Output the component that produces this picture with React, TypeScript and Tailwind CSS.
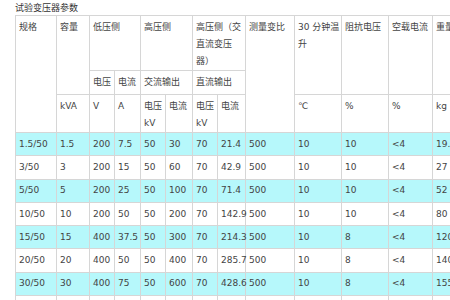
const rows: string[][] = [
  ['1.5/50', '1.5', '200', '7.5', '50', '30', '70', '21.4', '500', '10', '10', '<4', '19.5'],
  ['3/50', '3', '200', '15', '50', '60', '70', '42.9', '500', '10', '10', '<4', '27'],
  ['5/50', '5', '200', '25', '50', '100', '70', '71.4', '500', '10', '10', '<4', '52'],
  ['10/50', '10', '200', '50', '50', '200', '70', '142.9', '500', '10', '10', '<4', '80'],
  ['15/50', '15', '400', '37.5', '50', '300', '70', '214.3', '500', '10', '8', '<4', '120'],
  ['20/50', '20', '400', '50', '50', '400', '70', '285.7', '500', '10', '8', '<4', '140'],
  ['30/50', '30', '400', '75', '50', '600', '70', '428.6', '500', '10', '8', '<4', '155'],
  ['50/50', '50', '400', '125', '50', '1000', '70', '714.3', '500', '10', '8', '<4', '200'],
];

// column widths, border to border
const cols = [41, 33, 25, 26, 25, 27, 25, 28, 49, 47, 47, 44, 43];

const th = 'border border-[#d6d6d6] px-[3px] pt-[3px] align-top text-left font-normal whitespace-nowrap';
const td = 'border border-[#d6d6d6] px-[3px] align-middle whitespace-nowrap';

export default function App() {
  return (
    <div
      className="w-[450px] h-[300px] overflow-hidden bg-white pl-[15px] text-[#444] text-[9px] leading-[17px]"
      style={{ fontFamily: '"DejaVu Sans", "Noto Sans CJK SC", sans-serif' }}
    >
      <div className="h-[15px] leading-[15px] text-[#333] pt-[1px]">试验变压器参数</div>
      <table className="table-fixed border-collapse w-[460px]">
        <colgroup>
          {cols.map((w, i) => (
            <col key={i} style={{ width: w }} />
          ))}
        </colgroup>
        <thead>
          <tr className="h-[55px]">
            <th rowSpan={3} className={th}>规格</th>
            <th rowSpan={2} className={th}>容量</th>
            <th colSpan={2} className={th}>低压侧</th>
            <th colSpan={2} className={th}>高压侧</th>
            <th colSpan={2} className={th}>
              高压侧（交
              <br />
              直流变压
              <br />
              器）
            </th>
            <th rowSpan={3} className={th}>测量变比</th>
            <th rowSpan={2} className={th}>
              30 分钟温
              <br />
              升
            </th>
            <th rowSpan={2} className={th}>阻抗电压</th>
            <th rowSpan={2} className={th}>空载电流</th>
            <th rowSpan={2} className={th}>重量</th>
          </tr>
          <tr className="h-[24px]">
            <th className={th}>电压</th>
            <th className={th}>电流</th>
            <th colSpan={2} className={th}>交流输出</th>
            <th colSpan={2} className={th}>直流输出</th>
          </tr>
          <tr className="h-[38px]">
            <th className={th}>kVA</th>
            <th className={th}>V</th>
            <th className={th}>A</th>
            <th className={th}>
              电压
              <br />
              kV
            </th>
            <th className={th}>电流</th>
            <th className={th}>
              电压
              <br />
              kV
            </th>
            <th className={th}>电流</th>
            <th className={th}>℃</th>
            <th className={th}>%</th>
            <th className={th}>%</th>
            <th className={th}>kg</th>
          </tr>
        </thead>
        <tbody>
          {rows.map((r, i) => (
            <tr key={i} className={i % 2 === 0 ? 'h-[23.3px] bg-[#b6f8fb]' : 'h-[23.3px] bg-white'}>
              {r.map((c, j) => (
                <td key={j} className={td}>{c}</td>
              ))}
            </tr>
          ))}
        </tbody>
      </table>
    </div>
  );
}
